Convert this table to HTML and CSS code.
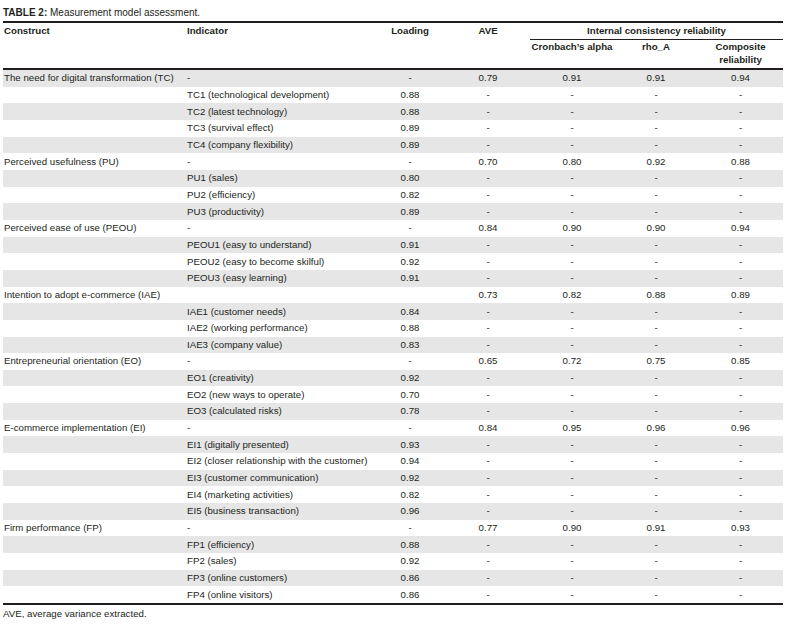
FILE: index.html
```html
<!DOCTYPE html>
<html>
<head>
<meta charset="utf-8">
<link rel="stylesheet" href="styles.css">
</head>
<body>
<div class="page">
  <div class="caption"><b>TABLE 2:</b> Measurement model assessment.</div>
  <table class="mm">
    <colgroup>
      <col class="c-construct"><col class="c-indicator"><col class="c-loading"><col class="c-ave"><col class="c-cron"><col class="c-rho"><col class="c-comp">
    </colgroup>
    <thead>
      <tr class="h1">
        <th rowspan="2" class="left first">Construct</th>
        <th rowspan="2" class="left ind">Indicator</th>
        <th rowspan="2">Loading</th>
        <th rowspan="2">AVE</th>
        <th colspan="3" class="group">Internal consistency reliability</th>
      </tr>
      <tr class="h2">
        <th>Cronbach’s alpha</th>
        <th>rho_A</th>
        <th>Composite<br>reliability</th>
      </tr>
    </thead>
    <tbody>
      <tr><td class="first">The need for digital transformation (TC)</td><td class="ind">-</td><td>-</td><td>0.79</td><td>0.91</td><td>0.91</td><td>0.94</td></tr>
      <tr><td class="first"></td><td class="ind">TC1 (technological development)</td><td>0.88</td><td>-</td><td>-</td><td>-</td><td>-</td></tr>
      <tr><td class="first"></td><td class="ind">TC2 (latest technology)</td><td>0.88</td><td>-</td><td>-</td><td>-</td><td>-</td></tr>
      <tr><td class="first"></td><td class="ind">TC3 (survival effect)</td><td>0.89</td><td>-</td><td>-</td><td>-</td><td>-</td></tr>
      <tr><td class="first"></td><td class="ind">TC4 (company flexibility)</td><td>0.89</td><td>-</td><td>-</td><td>-</td><td>-</td></tr>
      <tr><td class="first">Perceived usefulness (PU)</td><td class="ind">-</td><td>-</td><td>0.70</td><td>0.80</td><td>0.92</td><td>0.88</td></tr>
      <tr><td class="first"></td><td class="ind">PU1 (sales)</td><td>0.80</td><td>-</td><td>-</td><td>-</td><td>-</td></tr>
      <tr><td class="first"></td><td class="ind">PU2 (efficiency)</td><td>0.82</td><td>-</td><td>-</td><td>-</td><td>-</td></tr>
      <tr><td class="first"></td><td class="ind">PU3 (productivity)</td><td>0.89</td><td>-</td><td>-</td><td>-</td><td>-</td></tr>
      <tr><td class="first">Perceived ease of use (PEOU)</td><td class="ind">-</td><td>-</td><td>0.84</td><td>0.90</td><td>0.90</td><td>0.94</td></tr>
      <tr><td class="first"></td><td class="ind">PEOU1 (easy to understand)</td><td>0.91</td><td>-</td><td>-</td><td>-</td><td>-</td></tr>
      <tr><td class="first"></td><td class="ind">PEOU2 (easy to become skilful)</td><td>0.92</td><td>-</td><td>-</td><td>-</td><td>-</td></tr>
      <tr><td class="first"></td><td class="ind">PEOU3 (easy learning)</td><td>0.91</td><td>-</td><td>-</td><td>-</td><td>-</td></tr>
      <tr><td class="first">Intention to adopt e-commerce (IAE)</td><td class="ind"></td><td></td><td>0.73</td><td>0.82</td><td>0.88</td><td>0.89</td></tr>
      <tr><td class="first"></td><td class="ind">IAE1 (customer needs)</td><td>0.84</td><td>-</td><td>-</td><td>-</td><td>-</td></tr>
      <tr><td class="first"></td><td class="ind">IAE2 (working performance)</td><td>0.88</td><td>-</td><td>-</td><td>-</td><td>-</td></tr>
      <tr><td class="first"></td><td class="ind">IAE3 (company value)</td><td>0.83</td><td>-</td><td>-</td><td>-</td><td>-</td></tr>
      <tr><td class="first">Entrepreneurial orientation (EO)</td><td class="ind">-</td><td>-</td><td>0.65</td><td>0.72</td><td>0.75</td><td>0.85</td></tr>
      <tr><td class="first"></td><td class="ind">EO1 (creativity)</td><td>0.92</td><td>-</td><td>-</td><td>-</td><td>-</td></tr>
      <tr><td class="first"></td><td class="ind">EO2 (new ways to operate)</td><td>0.70</td><td>-</td><td>-</td><td>-</td><td>-</td></tr>
      <tr><td class="first"></td><td class="ind">EO3 (calculated risks)</td><td>0.78</td><td>-</td><td>-</td><td>-</td><td>-</td></tr>
      <tr><td class="first">E-commerce implementation (EI)</td><td class="ind">-</td><td>-</td><td>0.84</td><td>0.95</td><td>0.96</td><td>0.96</td></tr>
      <tr><td class="first"></td><td class="ind">EI1 (digitally presented)</td><td>0.93</td><td>-</td><td>-</td><td>-</td><td>-</td></tr>
      <tr><td class="first"></td><td class="ind">EI2 (closer relationship with the customer)</td><td>0.94</td><td>-</td><td>-</td><td>-</td><td>-</td></tr>
      <tr><td class="first"></td><td class="ind">EI3 (customer communication)</td><td>0.92</td><td>-</td><td>-</td><td>-</td><td>-</td></tr>
      <tr><td class="first"></td><td class="ind">EI4 (marketing activities)</td><td>0.82</td><td>-</td><td>-</td><td>-</td><td>-</td></tr>
      <tr><td class="first"></td><td class="ind">EI5 (business transaction)</td><td>0.96</td><td>-</td><td>-</td><td>-</td><td>-</td></tr>
      <tr><td class="first">Firm performance (FP)</td><td class="ind">-</td><td>-</td><td>0.77</td><td>0.90</td><td>0.91</td><td>0.93</td></tr>
      <tr><td class="first"></td><td class="ind">FP1 (efficiency)</td><td>0.88</td><td>-</td><td>-</td><td>-</td><td>-</td></tr>
      <tr><td class="first"></td><td class="ind">FP2 (sales)</td><td>0.92</td><td>-</td><td>-</td><td>-</td><td>-</td></tr>
      <tr><td class="first"></td><td class="ind">FP3 (online customers)</td><td>0.86</td><td>-</td><td>-</td><td>-</td><td>-</td></tr>
      <tr><td class="first"></td><td class="ind">FP4 (online visitors)</td><td>0.86</td><td>-</td><td>-</td><td>-</td><td>-</td></tr>
    </tbody>
  </table>
  <div class="note">AVE, average variance extracted.</div>
</div>
</body>
</html>
```

FILE: styles.css
```css
html, body {
  margin: 0;
  padding: 0;
  background: #ffffff;
}

.page {
  padding: 7px 0 0 3px;
  font-family: "Liberation Sans", Arial, sans-serif;
  font-size: 9.7px;
  color: #231f20;
}

.caption {
  font-size: 10px;
  line-height: 12px;
  height: 14px;
}

.caption b {
  font-weight: bold;
}

.mm {
  width: 780px;
  border-collapse: collapse;
  table-layout: fixed;
  border-top: 2px solid #231f20;
  border-bottom: 2px solid #231f20;
}

.c-construct { width: 180px; }
.c-indicator { width: 191px; }
.c-loading { width: 72px; }
.c-ave { width: 84px; }
.c-cron { width: 84px; }
.c-rho { width: 84px; }
.c-comp { width: 85px; }

.mm th {
  font-weight: bold;
  text-align: center;
  vertical-align: top;
  line-height: 13px;
  padding: 1px 0 0 0;
}

.mm thead tr.h1 th {
  height: 15px;
}

.mm th.group {
  border-bottom: 1px solid #231f20;
}

.mm thead tr.h2 th {
  padding: 0 0 2px 0;
  height: 25px;
}

.mm thead {
  border-bottom: 2px solid #231f20;
}

.mm th.left,
.mm td.first,
.mm td.ind {
  text-align: left;
}

.mm .first {
  padding-left: 1px;
}

.mm .ind {
  padding-left: 4px;
}

.mm td {
  height: 16.66px;
  padding-top: 0;
  padding-bottom: 0;
  line-height: 12px;
  text-align: center;
  vertical-align: middle;
  white-space: nowrap;
}

.mm tbody tr:nth-child(odd) td {
  background: #e6e6e6;
}

.note {
  padding-top: 3px;
  line-height: 12px;
}
```
